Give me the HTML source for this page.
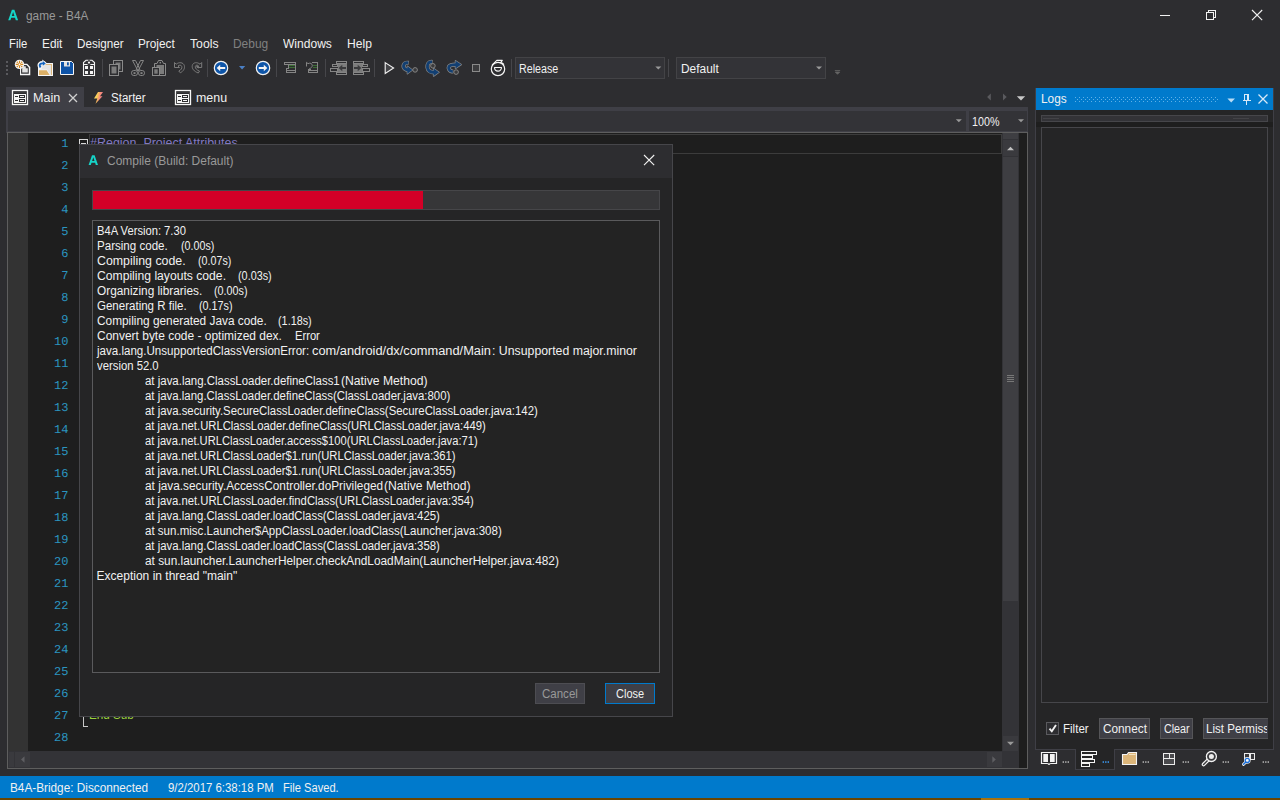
<!DOCTYPE html>
<html>
<head>
<meta charset="utf-8">
<title>game - B4A</title>
<style>
*{box-sizing:border-box;margin:0;padding:0}
html,body{width:1280px;height:800px;overflow:hidden;background:#2d2d30}
body{position:relative;font-family:"Liberation Sans",sans-serif;font-size:12px;color:#f1f1f1}
.a{position:absolute}
.t{position:absolute;white-space:pre;line-height:16px;height:16px;transform-origin:0 0}
.ln{position:absolute;left:30.5px;width:38px;text-align:right;font-family:"Liberation Mono",monospace;font-size:12px;color:#2b95c0;line-height:16px;height:16px;letter-spacing:0.1px;text-rendering:geometricPrecision}
svg{position:absolute;overflow:visible}
</style>
</head>
<body>
<!-- ===== TITLE BAR ===== -->
<svg style="left:0;top:0" width="1280" height="30" viewBox="0 0 1280 30">
  <path d="M8.2 20.2 L11.9 9.8 L14.4 9.8 L18.1 20.2 L15.8 20.2 L15 17.8 L11.2 17.8 L10.4 20.2 Z M11.8 16 L14.4 16 L13.1 12 Z" fill="#16d4c8" fill-rule="evenodd"/>
  <g stroke="#f1f1f1" stroke-width="1" fill="none" shape-rendering="crispEdges">
    <path d="M1160 15.5 H1170"/>
    <path d="M1206.5 12.5 H1213.5 V19.5 H1206.5 Z"/>
    <path d="M1208.5 12.5 V10.5 H1215.5 V17.5 H1213.5"/>
  </g>
  <path d="M1252 10 L1262.2 20.2 M1262.2 10 L1252 20.2" stroke="#f1f1f1" stroke-width="1.1" fill="none"/>
</svg>

<!-- ===== TOOLBAR ICONS ===== -->
<div class="a" style="left:515px;top:57px;width:150px;height:22px;background:#333337;border:1px solid #434346"></div>
<div class="a" style="left:676px;top:57px;width:150px;height:22px;background:#333337;border:1px solid #434346"></div>
<svg id="tb" style="left:0;top:54px" width="860" height="30" viewBox="0 54 860 30">
<!-- grip -->
<g fill="#5a5a5e" shape-rendering="crispEdges"><rect x="6" y="61" width="2" height="2"/><rect x="6" y="65" width="2" height="2"/><rect x="6" y="69" width="2" height="2"/><rect x="6" y="73" width="2" height="2"/></g>
<!-- separators -->
<g fill="#46464a" shape-rendering="crispEdges">
<rect x="102" y="59" width="1" height="18"/><rect x="207" y="59" width="1" height="18"/><rect x="276" y="59" width="1" height="18"/><rect x="325" y="59" width="1" height="18"/><rect x="374" y="59" width="1" height="18"/><rect x="511" y="59" width="1" height="18"/><rect x="668" y="59" width="1" height="18"/>
</g>
<!-- NEW -->
<g>
<path d="M20 63.8 H27.2 L30.3 67 V75.2 H20 Z" fill="#f6f6f6"/>
<path d="M21.1 65.1 H26.5 L28.8 67.4 V73.7 H21.1 Z" fill="#333336"/>
<path d="M22.2 66.3 H25.8 V68.3 H27.8 V72.6 H22.2 Z" fill="#e2e2e2"/>
<circle cx="19.5" cy="64.4" r="4.7" fill="#f3f3f3"/>
<g stroke="#d6871b" stroke-width="1.1" fill="none"><path d="M19.5 60.7 V68.1 M15.8 64.4 H23.2"/></g>
<g fill="#d6871b"><circle cx="17.3" cy="62.2" r="0.750"/><circle cx="21.7" cy="62.2" r="0.750"/><circle cx="17.3" cy="66.6" r="0.750"/><circle cx="21.7" cy="66.6" r="0.750"/></g>
<circle cx="19.5" cy="64.4" r="1.3" fill="#fff" stroke="#d6871b" stroke-width="0.9"/>
</g>
<!-- OPEN -->
<g>
<path d="M38 63 H53 V76 H38 Z" fill="#f6f6f6"/>
<path d="M39 64 H52 V75 H39 Z" fill="#dcb67a"/>
<path d="M39 65 H51 V75 H39 Z" fill="#e4e4e4"/>
<path d="M38 69.5 H47 L50.5 75 V76 H38 Z" fill="#f6f6f6"/>
<path d="M39 70.3 H46.6 L49.7 74.9 H39 Z" fill="#dcb067"/>
<path d="M40.3 67.6 C37.8 64 40.5 62.3 44 63" fill="none" stroke="#f6f6f6" stroke-width="3.6" stroke-linecap="round"/>
<path d="M42.3 59.6 L47 63.3 L42.3 67 Z" fill="#f6f6f6"/>
<path d="M40.5 67.4 C38.6 64.4 40.5 63 43.5 63.4" fill="none" stroke="#1565c0" stroke-width="1.9"/>
<path d="M42.8 61 L45.8 63.4 L42.8 65.8 Z" fill="#1565c0"/>
</g>
<!-- SAVE -->
<g>
<path d="M60.5 61.5 H71.5 L73.5 63.5 V74.5 H60.5 Z" fill="#0e53a7" stroke="#f6f6f6" stroke-width="1"/>
<rect x="64" y="62" width="6" height="4.5" fill="#e2e2e2"/>
<rect x="67" y="62.3" width="1.8" height="3" fill="#0e53a7"/>
</g>
<!-- EXPORT -->
<g>
<path d="M83.5 75.5 V62.5 L86 60.3 H92 L94.5 62.5 V75.5 Z" fill="#333336" stroke="#f3f3f3" stroke-width="1.1"/>
<rect x="88.3" y="59.5" width="1.4" height="1.6" fill="#2d2d30"/>
<path d="M84 64.5 H87.6 M90.4 64.5 H94" stroke="#f3f3f3" stroke-width="1" fill="none"/>
<circle cx="89" cy="62.6" r="1.1" fill="#f3f3f3"/>
<g fill="#f3f3f3" shape-rendering="crispEdges"><rect x="85" y="66" width="3" height="3"/><rect x="90" y="66" width="3" height="3"/><rect x="85" y="71" width="3" height="3"/><rect x="90" y="71" width="3" height="3"/></g>
</g>
<!-- COPY -->
<g stroke="#8a8a8a" stroke-width="1" fill="#2d2d30">
<rect x="113.5" y="60.5" width="9" height="11"/><rect x="115.5" y="62.5" width="5" height="7" fill="#7c7c7c" stroke="none"/>
<rect x="109.5" y="64.5" width="9" height="11"/><rect x="111.5" y="66.5" width="5" height="7" fill="#7c7c7c" stroke="none"/>
</g>
<!-- CUT -->
<g stroke="#858585" stroke-width="1" fill="none" stroke-linejoin="round">
<path d="M132.5 60.5 H135.5 L140 69.5 L138 70.8 Z"/>
<path d="M143.5 60.5 H140.5 L136 69.5 L138 70.8 Z"/>
<rect x="131.5" y="70.5" width="6" height="5" rx="2.3"/><rect x="138.5" y="70.5" width="6" height="5" rx="2.3"/>
<rect x="133.5" y="72.2" width="2" height="1.8" fill="#858585" stroke="none"/><rect x="140.5" y="72.2" width="2" height="1.8" fill="#858585" stroke="none"/>
</g>
<!-- PASTE -->
<g stroke="#8a8a8a" stroke-width="1" fill="none">
<path d="M154.5 68 V63.5 H157 L158.5 60.5 H162 L163.5 63.5 H165.5 V75.5 H160"/>
<rect x="156.5" y="65" width="7.5" height="9" fill="#7c7c7c" stroke="none"/>
<rect x="152.5" y="67.5" width="7" height="8" fill="#2d2d30"/>
<rect x="154.3" y="69.3" width="3.4" height="4.4" fill="#7c7c7c" stroke="none"/>
<rect x="159.6" y="62" width="1.4" height="1.4" fill="#8a8a8a" stroke="none"/>
</g>
<!-- UNDO -->
<g stroke="#7a7a7a" stroke-width="1" fill="none" stroke-linejoin="round">
<path d="M174.5 67.5 V62.5 L176.2 64.2 C179 61.8 183.3 62.3 184.3 65.5 C185.2 68.5 183.3 71.3 180.3 72.8 L178.8 71 C181 70 182.3 68.3 181.8 66.6 C181.3 64.8 179.3 64.8 178 66 L179.5 67.5 Z"/>
</g>
<!-- REDO -->
<g stroke="#7a7a7a" stroke-width="1" fill="none" stroke-linejoin="round">
<path d="M201.7 67.5 V62.5 L200 64.2 C197.2 61.8 193 62.3 192.3 65.5 C191.6 68.5 194 71.5 198.3 73 L199.5 71.2 C197 70.2 195 68.3 195.3 66.6 C195.7 64.8 197.5 64.8 198.7 66 L197.2 67.5 Z"/>
<path d="M196.5 66 L199.3 67.8" stroke-width="1.6"/>
</g>
<!-- BACK / FORWARD -->
<g>
<circle cx="221" cy="68" r="6.7" fill="#0e55a8" stroke="#f3f3f3" stroke-width="1.2"/>
<path d="M216.7 68 L220.2 64.8 V66.9 H225.2 V69.1 H220.2 V71.2 Z" fill="#f3f3f3"/>
<path d="M239 66 H245.2 L242.1 69.6 Z" fill="#4a7fc4"/>
<circle cx="263" cy="68" r="6.7" fill="#0e55a8" stroke="#f3f3f3" stroke-width="1.2"/>
<path d="M267.3 68 L263.8 64.8 V66.9 H258.8 V69.1 H263.8 V71.2 Z" fill="#f3f3f3"/>
</g>
<!-- COMMENT -->
<g stroke="#858585" stroke-width="1" fill="none" shape-rendering="crispEdges">
<rect x="284.5" y="62.5" width="11" height="2"/>
<path d="M288.5 64.5 V68.5 M295.5 64.5 V72.5 H286.5 V70.5 H295.5 M286.5 70.5 V68.5 H288.5"/>
<path d="M289 65.5 H295 M289 67.5 H295" stroke="#3a6e33"/>
</g>
<!-- UNCOMMENT -->
<g stroke="#858585" stroke-width="1" fill="none">
<g shape-rendering="crispEdges">
<path d="M311.5 62.5 H317.5 V72.5 H308.5 V69.5 H311"/>
<path d="M308.5 70.5 H317.5"/>
<path d="M312.5 65.5 H317 M312.5 67.5 H317" stroke="#3a6e33"/>
</g>
<path d="M306.5 66.5 V62.3 L308 63.7 C310 62.5 312.3 63.5 312.3 65.5 C312.3 67 310.8 68.3 309 69" />
</g>
<!-- OUTDENT -->
<g stroke="#858585" stroke-width="1" fill="none" shape-rendering="crispEdges">
<rect x="336.5" y="61.5" width="10" height="2"/><rect x="336.5" y="72.5" width="10" height="2"/>
<rect x="332.5" y="64.5" width="5" height="2"/><rect x="330.5" y="68.5" width="7" height="3"/>
<rect x="338" y="64" width="9" height="8" fill="#7c7c7c" stroke="none"/>
</g>
<path d="M338.7 68 L342.3 64.8 V66.9 H346 V69.1 H342.3 V71.2 Z" fill="#3a3a3c"/>
<!-- INDENT -->
<g stroke="#858585" stroke-width="1" fill="none" shape-rendering="crispEdges">
<rect x="353.5" y="61.5" width="10" height="2"/><rect x="353.5" y="72.5" width="10" height="2"/>
<rect x="362.5" y="64.5" width="5" height="2"/><rect x="362.5" y="68.5" width="7" height="3"/>
<rect x="353" y="64" width="9" height="8" fill="#7c7c7c" stroke="none"/>
</g>
<path d="M361.3 68 L357.7 64.8 V66.9 H354 V69.1 H357.7 V71.2 Z" fill="#3a3a3c"/>
<!-- PLAY -->
<path d="M385.2 62.6 L393.6 68 L385.2 73.4 Z" fill="#444447" stroke="#f3f3f3" stroke-width="1.1" stroke-linejoin="miter"/>
<!-- STEP INTO -->
<g fill="none" stroke-linejoin="round">
<path d="M408.8 62.9 C403.5 62 402.3 66.6 405 68.9 C406 69.7 407.3 70 408.3 70" stroke="#858585" stroke-width="4.2"/>
<path d="M407.4 66.2 L412.3 70 L407.4 73.8 Z" fill="#858585" stroke="#858585" stroke-width="1.4"/>
<path d="M408.3 62.9 C403.5 62 402.3 66.6 405 68.9 C406 69.7 407.3 70 408.3 70" stroke="#123f72" stroke-width="2.8"/>
<path d="M407.4 66.2 L412.3 70 L407.4 73.8 Z" fill="#123f72"/>
<circle cx="415.1" cy="69.9" r="2.3" fill="#3a3a3c" stroke="#858585" stroke-width="1"/>
</g>
<!-- STEP OVER -->
<g fill="none" stroke-linejoin="round">
<path d="M432.6 62 C428 61.3 427.2 65 427.5 67.5 C427.8 70.5 430.5 72.3 434 72.3" stroke="#858585" stroke-width="4.2"/>
<path d="M433.6 68.5 L439 72.3 L433.6 76.1 Z" fill="#858585" stroke="#858585" stroke-width="1.4"/>
<path d="M432.1 62 C428 61.3 427.2 65 427.5 67.5 C427.8 70.5 430.5 72.3 434 72.3" stroke="#123f72" stroke-width="2.8"/>
<path d="M433.6 68.5 L439 72.3 L433.6 76.1 Z" fill="#123f72"/>
<circle cx="432.9" cy="65.8" r="2.3" fill="#3a3a3c" stroke="#858585" stroke-width="1"/>
</g>
<!-- STEP OUT -->
<g fill="none" stroke-linejoin="round">
<path d="M453.3 71.5 C449 71.5 448.2 68 449 66.5 C450 64.6 452.5 64.6 456 64.6" stroke="#858585" stroke-width="4.2"/>
<path d="M455.5 60.8 L461.2 64.6 L455.5 68.4 Z" fill="#858585" stroke="#858585" stroke-width="1.4"/>
<path d="M452.8 71.5 C449 71.5 448.2 68 449 66.5 C450 64.6 452.5 64.6 456 64.6" stroke="#123f72" stroke-width="2.8"/>
<path d="M455.5 60.8 L461.2 64.6 L455.5 68.4 Z" fill="#123f72"/>
<circle cx="456.1" cy="72.1" r="2.3" fill="#3a3a3c" stroke="#858585" stroke-width="1"/>
</g>
<!-- STOP -->
<rect x="472.5" y="64.5" width="7" height="7" fill="#3c3c3e" stroke="#8a8a8a" stroke-width="1" shape-rendering="crispEdges"/>
<!-- RESTART -->
<g fill="none" stroke="#f6f6f6" stroke-width="1.1" stroke-linejoin="round">
<circle cx="498" cy="69" r="6.7" stroke-width="1.2"/>
<path d="M494.5 67.5 H501.5 A3.5 3.6 0 0 1 494.5 67.5 Z"/>
<path d="M492 65.2 L496.8 60.4 H502.3 L500.6 62.6 C502.2 63 503.3 63.7 504 64.6"/>
</g>
<!-- combo arrows -->
<path d="M655.3 66.5 H661.3 L658.3 69.5 Z" fill="#999"/>
<path d="M816 66.5 H822 L819 69.5 Z" fill="#999"/>
<path d="M834.8 70.5 H840.2 M835.3 72 H839.7 L837.5 74.3 Z" fill="#666" stroke="#666" stroke-width="0.8"/>

</svg>

<!-- ===== TABS ===== -->
<div class="a" style="left:6px;top:87px;width:78px;height:21px;background:#3f3f46"></div>
<div class="a" style="left:6px;top:107px;width:1022px;height:26px;background:#3f3f46"></div>
<div class="a" style="left:8px;top:111px;width:958px;height:20px;background:#333337"></div>
<div class="a" style="left:969px;top:111px;width:58px;height:20px;background:#333337"></div>
<svg style="left:0;top:84px" width="1040" height="50" viewBox="0 84 1040 50">
<!-- module icon (Main) -->
<g>
<rect x="12.5" y="90.5" width="15" height="14" fill="#2d2d30" stroke="#f6f6f6" stroke-width="1.3"/>
<rect x="14" y="94" width="12" height="9" fill="#f6f6f6" shape-rendering="crispEdges"/>
<rect x="14" y="92" width="12" height="1" fill="#3a3a3c" shape-rendering="crispEdges"/>
<g fill="#2d2d30" shape-rendering="crispEdges">
<rect x="15" y="96" width="3" height="1"/><rect x="19" y="95" width="6" height="3"/>
<rect x="15" y="100" width="3" height="1"/><rect x="19" y="99" width="6" height="3"/>
</g>
<g fill="#f6f6f6" shape-rendering="crispEdges"><rect x="20" y="96" width="4" height="1"/><rect x="20" y="100" width="4" height="1"/></g>
</g>
<g transform="translate(163 0)">
<rect x="12.5" y="90.5" width="15" height="14" fill="#2d2d30" stroke="#f6f6f6" stroke-width="1.3"/>
<rect x="14" y="94" width="12" height="9" fill="#f6f6f6" shape-rendering="crispEdges"/>
<rect x="14" y="92" width="12" height="1" fill="#3a3a3c" shape-rendering="crispEdges"/>
<g fill="#2d2d30" shape-rendering="crispEdges">
<rect x="15" y="96" width="3" height="1"/><rect x="19" y="95" width="6" height="3"/>
<rect x="15" y="100" width="3" height="1"/><rect x="19" y="99" width="6" height="3"/>
</g>
<g fill="#f6f6f6" shape-rendering="crispEdges"><rect x="20" y="96" width="4" height="1"/><rect x="20" y="100" width="4" height="1"/></g>
</g>
<!-- tab close X -->
<path d="M69 94 L77 102 M77 94 L69 102" stroke="#d0d0d0" stroke-width="1.3" fill="none"/>
<!-- lightning -->
<defs><linearGradient id="lg" x1="0" y1="0.2" x2="1" y2="0.5"><stop offset="0" stop-color="#f3ea62"/><stop offset="0.4" stop-color="#f9c45a"/><stop offset="0.62" stop-color="#f78f78"/><stop offset="1" stop-color="#ee7590"/></linearGradient></defs>
<path d="M98 92 L103 92 L100 96.3 L102.5 96.3 L95.5 103.8 L97.3 98.6 L94 98.6 Z" fill="url(#lg)"/>
<!-- tab scroll arrows -->
<path d="M990.8 93.5 V100.5 L987.1 97 Z" fill="#5a5a5e"/>
<path d="M1003 93.5 V100.5 L1006.7 97 Z" fill="#5a5a5e"/>
<path d="M1016.8 96.3 H1025.2 L1021 100.5 Z" fill="#c8c8c8"/>
<!-- combobox arrows -->
<path d="M955.8 119.3 H961.8 L958.8 122.3 Z" fill="#999"/>
<path d="M1018 119.3 H1024 L1021 122.3 Z" fill="#999"/>

</svg>

<!-- ===== EDITOR ===== -->
<div class="a" style="left:7px;top:132px;width:1021px;height:637px;background:#1e1e1e;border:1px solid #5e5e5e"></div>
<div class="a" style="left:8px;top:133px;width:20px;height:618px;background:#333333"></div>
<div class="a" style="left:89px;top:134px;width:913px;height:20px;border:1px solid #3c3c3c"></div>
<!-- vertical scrollbar -->
<div class="a" style="left:1002px;top:133px;width:17px;height:618px;background:#333337"></div>
<div class="a" style="left:1003px;top:133px;width:15px;height:6px;background:#3e3e42"></div>
<div class="a" style="left:1003px;top:140px;width:15px;height:16px;background:#3a3a3e"></div>
<div class="a" style="left:1003px;top:157px;width:15px;height:444px;background:#3e3e42"></div>
<div class="a" style="left:1003px;top:736px;width:15px;height:15px;background:#3a3a3e"></div>
<!-- horizontal scrollbar -->
<div class="a" style="left:8px;top:751px;width:994px;height:17px;background:#333337"></div>
<div class="a" style="left:1002px;top:751px;width:17px;height:17px;background:#333337"></div>
<div class="a" style="left:9px;top:752px;width:5px;height:15px;background:#3a3a3e"></div>
<div class="a" style="left:15px;top:752px;width:15px;height:15px;background:#3a3a3e"></div>
<div class="a" style="left:987px;top:752px;width:15px;height:15px;background:#3a3a3e"></div>
<svg style="left:0;top:130px" width="1030" height="640" viewBox="0 130 1030 640">
<!-- collapse box -->
<rect x="79.5" y="139.5" width="8" height="8" fill="#1e1e1e" stroke="#d8d8d8" stroke-width="1" shape-rendering="crispEdges"/>
<rect x="81" y="143" width="5" height="1" fill="#d8d8d8" shape-rendering="crispEdges"/>
<!-- fold end bracket -->
<path d="M83.5 715 V726.5 H88" fill="none" stroke="#c8c8c8" stroke-width="1" shape-rendering="crispEdges"/>
<!-- v scrollbar arrows -->
<path d="M1007 150.3 H1014 L1010.5 146.8 Z" fill="#c0c0c0"/>
<path d="M1007 741.8 H1014 L1010.5 745.3 Z" fill="#999"/>
<g fill="#777" shape-rendering="crispEdges"><rect x="1007" y="375" width="7" height="1"/><rect x="1007" y="377" width="7" height="1"/><rect x="1007" y="379" width="7" height="1"/><rect x="1007" y="381" width="7" height="1"/></g>
<!-- h scrollbar arrows -->
<path d="M24.5 756.2 V762.8 L21 759.5 Z" fill="#5e5e62"/>
<path d="M992.3 756.2 V762.8 L995.8 759.5 Z" fill="#5e5e62"/>

</svg>
<div class="ln" style="top:136px">1</div>
<div class="ln" style="top:158px">2</div>
<div class="ln" style="top:180px">3</div>
<div class="ln" style="top:202px">4</div>
<div class="ln" style="top:224px">5</div>
<div class="ln" style="top:246px">6</div>
<div class="ln" style="top:268px">7</div>
<div class="ln" style="top:290px">8</div>
<div class="ln" style="top:312px">9</div>
<div class="ln" style="top:334px">10</div>
<div class="ln" style="top:356px">11</div>
<div class="ln" style="top:378px">12</div>
<div class="ln" style="top:400px">13</div>
<div class="ln" style="top:422px">14</div>
<div class="ln" style="top:444px">15</div>
<div class="ln" style="top:466px">16</div>
<div class="ln" style="top:488px">17</div>
<div class="ln" style="top:510px">18</div>
<div class="ln" style="top:532px">19</div>
<div class="ln" style="top:554px">20</div>
<div class="ln" style="top:576px">21</div>
<div class="ln" style="top:598px">22</div>
<div class="ln" style="top:620px">23</div>
<div class="ln" style="top:642px">24</div>
<div class="ln" style="top:664px">25</div>
<div class="ln" style="top:686px">26</div>
<div class="ln" style="top:708px">27</div>
<div class="ln" style="top:730px">28</div>
<div class="t" style="left:89.70px;top:135px;transform:scaleX(1.0394);color:#8179c2">#Region  Project Attributes</div>
<div class="t" style="left:88.83px;top:707px;transform:scaleX(0.9733);color:#9bd23c">End Sub</div>

<!-- ===== LOGS PANEL ===== -->
<div class="a" style="left:1035px;top:88px;width:239px;height:662px;background:#252526;border:1px solid #3f3f46"></div>
<div class="a" style="left:1036px;top:88px;width:237px;height:22px;background:#007acc"></div>
<div class="a" style="left:1041px;top:115px;width:227px;height:7px;background:#333337;border:1px solid #46464a"></div>
<div class="a" style="left:1043px;top:118px;width:16px;height:1px;background:#434347"></div>
<div class="a" style="left:1233px;top:118px;width:16px;height:1px;background:#434347"></div>
<div class="a" style="left:1036px;top:122px;width:237px;height:5px;background:#1e1e1e"></div>
<div class="a" style="left:1041px;top:127px;width:227px;height:576px;border:1px solid #46464a"></div>
<!-- bottom controls -->
<div class="a" style="left:1046px;top:722px;width:13px;height:13px;background:#2d2d30;border:1px solid #5a5a5e"></div>
<div class="a" style="left:1099px;top:718px;width:51px;height:21px;background:#3f3f46;border:1px solid #555558"></div>
<div class="a" style="left:1160px;top:718px;width:33px;height:21px;background:#3f3f46;border:1px solid #555558"></div>
<div class="a" style="left:1203px;top:718px;width:65px;height:21px;background:#3f3f46;border:1px solid #555558;border-right:none"></div>
<!-- bottom tab strip -->
<div class="a" style="left:1075px;top:749px;width:40px;height:21px;background:#252526;border:1px solid #3f3f46;border-top:none"></div>
<svg style="left:1030px;top:84px" width="250" height="690" viewBox="1030 84 250 690">
<!-- dotted grip -->
<defs><pattern id="dots" x="1075" y="97" width="4" height="4" patternUnits="userSpaceOnUse"><rect x="0" y="0" width="1" height="1" fill="#5fb0e8"/><rect x="2" y="2" width="1" height="1" fill="#5fb0e8"/></pattern></defs>
<rect x="1075" y="97" width="144" height="5" fill="url(#dots)" shape-rendering="crispEdges"/>
<path d="M1227.4 98.6 H1235 L1231.2 102.4 Z" fill="#b8dcf5"/>
<!-- pin -->
<g stroke="#d8e9f7" stroke-width="1" fill="none" shape-rendering="crispEdges"><path d="M1244.5 94.5 H1248.5 V100.5 H1244.5 Z M1242.5 100.5 H1250.5 M1246.5 100.5 V105"/><rect x="1247" y="95" width="1" height="5" fill="#d8e9f7" stroke="none"/></g>
<path d="M1258.5 94.5 L1267.5 103.5 M1267.5 94.5 L1258.5 103.5" stroke="#d8e9f7" stroke-width="1.3" fill="none"/>
<!-- checkbox check -->
<path d="M1049.5 728.6 L1051.8 731.3 L1056 725" fill="none" stroke="#f1f1f1" stroke-width="1.9"/>
<!-- book icon -->
<g>
<path d="M1041.5 752.5 H1056.5 V763.5 H1051 Q1049 763.5 1049 765 Q1049 763.5 1047 763.5 H1041.5 Z" fill="#2d2d30" stroke="#f3f3f3" stroke-width="1.2"/>
<rect x="1043.3" y="754" width="4.7" height="8" fill="#f3f3f3"/><rect x="1050" y="754" width="4.7" height="8" fill="#f3f3f3"/>
</g>
<!-- logs icon -->
<g fill="#252526" stroke="#f3f3f3" stroke-width="1.1" shape-rendering="crispEdges">
<rect x="1081.5" y="751.5" width="15" height="3"/><rect x="1081.5" y="755.5" width="11" height="3"/><rect x="1081.5" y="759.5" width="13" height="3"/><rect x="1081.5" y="763.5" width="8" height="3"/>
</g>
<!-- folder icon -->
<path d="M1122.5 764.5 V754.5 H1127 L1128.5 752.5 H1136.5 V764.5 Z" fill="#dcb67a" stroke="#f3f3f3" stroke-width="1.1"/>
<rect x="1129" y="754" width="6.5" height="1" fill="#f3e3c3"/>
<!-- grid icon -->
<rect x="1163.5" y="753.5" width="11" height="11" fill="#4a4a4d" stroke="#ececec" stroke-width="1" shape-rendering="crispEdges"/>
<path d="M1169.5 753.5 V758.5 M1163.5 758.5 H1174.5" stroke="#ececec" stroke-width="1" fill="none" shape-rendering="crispEdges"/>
<!-- search icon -->
<g fill="none">
<path d="M1208.3 759.8 L1203.6 764.4" stroke="#f3f3f3" stroke-width="3.8" stroke-linecap="round"/>
<path d="M1208.3 759.8 L1203.6 764.4" stroke="#3a3a3d" stroke-width="1.4" stroke-linecap="round"/>
<circle cx="1211.4" cy="756.5" r="5" fill="#3a3a3d" stroke="#f3f3f3" stroke-width="1.3"/>
<circle cx="1211.4" cy="756.5" r="2.5" fill="#ececec"/>
</g>
<!-- find refs icon -->
<rect x="1244.5" y="753.5" width="10" height="6" fill="#3a3a3d" stroke="#ececec" stroke-width="1" shape-rendering="crispEdges"/>
<rect x="1249" y="754" width="2" height="5" fill="#ececec" shape-rendering="crispEdges"/>
<path d="M1245.6 762.2 L1243.6 764.3" stroke="#f3f3f3" stroke-width="3" stroke-linecap="round" fill="none"/>
<circle cx="1247.3" cy="760.4" r="3.3" fill="#f3f3f3"/>
<path d="M1245.6 762.2 L1243.6 764.3" stroke="#1a6ed8" stroke-width="1.5" stroke-linecap="round" fill="none"/>
<circle cx="1247.3" cy="760.4" r="2.1" fill="#f6f6f6" stroke="#1a6ed8" stroke-width="1.3"/>
<!-- "..." labels -->
<g fill="#a8a8a8"><rect x="1062.6" y="761.2" width="1.4" height="1.7"/><rect x="1065.1" y="761.2" width="1.4" height="1.7"/><rect x="1067.6" y="761.2" width="1.4" height="1.7"/></g>
<g fill="#3a8fe0"><rect x="1102.6" y="761.2" width="1.4" height="1.7"/><rect x="1105.1" y="761.2" width="1.4" height="1.7"/><rect x="1107.6" y="761.2" width="1.4" height="1.7"/></g>
<g fill="#a8a8a8"><rect x="1142.6" y="761.2" width="1.4" height="1.7"/><rect x="1145.1" y="761.2" width="1.4" height="1.7"/><rect x="1147.6" y="761.2" width="1.4" height="1.7"/></g>
<g fill="#a8a8a8"><rect x="1182.6" y="761.2" width="1.4" height="1.7"/><rect x="1185.1" y="761.2" width="1.4" height="1.7"/><rect x="1187.6" y="761.2" width="1.4" height="1.7"/></g>
<g fill="#a8a8a8"><rect x="1222.6" y="761.2" width="1.4" height="1.7"/><rect x="1225.1" y="761.2" width="1.4" height="1.7"/><rect x="1227.6" y="761.2" width="1.4" height="1.7"/></g>
<g fill="#a8a8a8"><rect x="1262.6" y="761.2" width="1.4" height="1.7"/><rect x="1265.1" y="761.2" width="1.4" height="1.7"/><rect x="1267.6" y="761.2" width="1.4" height="1.7"/></g>

</svg>

<!-- ===== STATUS BAR ===== -->
<div class="a" style="left:0;top:776px;width:1280px;height:22px;background:#007acc"></div>
<div class="a" style="left:0;top:798px;width:1280px;height:2px;background:#6a4500"></div>
<div class="a" style="left:981px;top:798px;width:48px;height:2px;background:#a8720f"></div>

<!-- ===== DIALOG ===== -->
<div class="a" style="left:79px;top:144px;width:594px;height:573px;background:#252526;border:1px solid #46464a"></div>
<div class="a" style="left:80px;top:145px;width:592px;height:33px;background:#2d2d30"></div>
<div class="a" style="left:92px;top:190px;width:568px;height:20px;background:#363638;border:1px solid #464649"></div>
<div class="a" style="left:93px;top:191px;width:330px;height:18px;background:#d40027"></div>
<div class="a" style="left:92px;top:220px;width:568px;height:453px;background:#232323;border:1px solid #5a5a5c"></div>
<div class="a" style="left:535px;top:683px;width:50px;height:21px;background:#3f3f46;border:1px solid #4d4d52"></div>
<div class="a" style="left:605px;top:683px;width:50px;height:21px;background:#3f3f46;border:1px solid #007acc"></div>
<svg style="left:79px;top:144px" width="594" height="40" viewBox="79 144 594 40">
  <path d="M88.6 165 L92 155.3 L94.6 155.3 L98 165 L95.8 165 L95.1 162.8 L91.5 162.8 L90.8 165 Z M92.1 161 L94.5 161 L93.3 157.3 Z" fill="#16d4c8" fill-rule="evenodd"/>
  <path d="M644 155 L654.2 165.2 M654.2 155 L644 165.2" stroke="#f1f1f1" stroke-width="1.1" fill="none"/>
</svg>

<div class="t" style="left:26.00px;top:8px;transform:scaleX(0.9841);color:#999999">game - B4A</div>
<div class="t" style="left:9.46px;top:36px;transform:scaleX(0.9389)">File</div>
<div class="t" style="left:41.52px;top:36px;transform:scaleX(0.9850)">Edit</div>
<div class="t" style="left:76.73px;top:36px;transform:scaleX(0.9723)">Designer</div>
<div class="t" style="left:137.62px;top:36px;transform:scaleX(0.9838)">Project</div>
<div class="t" style="left:189.80px;top:36px;transform:scaleX(1.0179)">Tools</div>
<div class="t" style="left:283.10px;top:36px;transform:scaleX(1.0041)">Windows</div>
<div class="t" style="left:347.09px;top:36px;transform:scaleX(1.0083)">Help</div>
<div class="t" style="left:233.31px;top:36px;transform:scaleX(0.9941);color:#808080">Debug</div>
<div class="t" style="left:519.21px;top:61px;transform:scaleX(0.8907)">Release</div>
<div class="t" style="left:680.51px;top:61px;transform:scaleX(0.9919)">Default</div>
<div class="t" style="left:33.05px;top:90px;transform:scaleX(1.0480)">Main</div>
<div class="t" style="left:110.84px;top:90px;transform:scaleX(0.9600)">Starter</div>
<div class="t" style="left:196.07px;top:90px;transform:scaleX(1.0345)">menu</div>
<div class="t" style="left:972.31px;top:114px;transform:scaleX(0.8933)">100%</div>
<div class="t" style="left:1040.62px;top:91px;transform:scaleX(0.9840)">Logs</div>
<div class="t" style="left:106.90px;top:153px;transform:scaleX(0.9984);color:#999999">Compile (Build: Default)</div>
<div class="t" style="left:541.90px;top:686px;transform:scaleX(0.9595);color:#999999">Cancel</div>
<div class="t" style="left:615.60px;top:686px;transform:scaleX(0.9161)">Close</div>
<div class="t" style="left:1063.34px;top:721px;transform:scaleX(0.9615)">Filter</div>
<div class="t" style="left:1103.40px;top:721px;transform:scaleX(0.9822)">Connect</div>
<div class="t" style="left:1164.10px;top:721px;transform:scaleX(0.8931)">Clear</div>
<div class="a" style="left:1204px;top:721px;width:63px;height:16px;overflow:hidden"><div class="t" style="left:2.03px;top:0;transform:scaleX(0.9656)">List Permissions</div></div>
<div class="t" style="left:10.32px;top:780px;transform:scaleX(0.9813)">B4A-Bridge: Disconnected</div>
<div class="t" style="left:168.20px;top:780px;transform:scaleX(0.9495)">9/2/2017 6:38:18 PM</div>
<div class="t" style="left:283.27px;top:780px;transform:scaleX(0.9276)">File Saved.</div>
<div class="t" style="left:96.60px;top:223px;transform:scaleX(0.9316)">B4A Version: 7.30</div>
<div class="t" style="left:96.60px;top:238px;transform:scaleX(0.9644)">Parsing code.</div>
<div class="t" style="left:180.60px;top:238px;transform:scaleX(0.8919)">(0.00s)</div>
<div class="t" style="left:96.60px;top:253px;transform:scaleX(1.0306)">Compiling code.</div>
<div class="t" style="left:197.50px;top:253px;transform:scaleX(0.8919)">(0.07s)</div>
<div class="t" style="left:96.60px;top:268px;transform:scaleX(1.0126)">Compiling layouts code.</div>
<div class="t" style="left:238.40px;top:268px;transform:scaleX(0.9027)">(0.03s)</div>
<div class="t" style="left:96.60px;top:283px;transform:scaleX(0.9858)">Organizing libraries.</div>
<div class="t" style="left:214.20px;top:283px;transform:scaleX(0.8973)">(0.00s)</div>
<div class="t" style="left:96.60px;top:298px;transform:scaleX(0.9602)">Generating R file.</div>
<div class="t" style="left:199.40px;top:298px;transform:scaleX(0.8973)">(0.17s)</div>
<div class="t" style="left:96.60px;top:313px;transform:scaleX(0.9860)">Compiling generated Java code.</div>
<div class="t" style="left:278.40px;top:313px;transform:scaleX(0.9027)">(1.18s)</div>
<div class="t" style="left:96.60px;top:328px;transform:scaleX(0.9973)">Convert byte code - optimized dex.</div>
<div class="t" style="left:294.67px;top:328px;transform:scaleX(0.9308)">Error</div>
<div class="t" style="left:96.60px;top:343px;transform:scaleX(0.9639)">java.lang.UnsupportedClassVersionError:</div>
<div class="t" style="left:312.10px;top:343px;transform:scaleX(1.0689)">com/android/dx/command/Main</div>
<div class="t" style="left:492.38px;top:343px;transform:scaleX(1.0248)">: Unsupported major.minor</div>
<div class="t" style="left:96.60px;top:358px;transform:scaleX(0.9431)">version 52.0</div>
<div class="t" style="left:144.60px;top:373px;transform:scaleX(0.9539)">at java.lang.ClassLoader.defineClass1</div>
<div class="t" style="left:340.80px;top:373px;transform:scaleX(1.0141)">(Native Method)</div>
<div class="t" style="left:144.60px;top:388px;transform:scaleX(0.9516)">at java.lang.ClassLoader.defineClass(ClassLoader.java:800)</div>
<div class="t" style="left:144.60px;top:403px;transform:scaleX(0.9471)">at java.security.SecureClassLoader.defineClass(SecureClassLoader.java:142)</div>
<div class="t" style="left:144.60px;top:418px;transform:scaleX(0.9392)">at java.net.URLClassLoader.defineClass(URLClassLoader.java:449)</div>
<div class="t" style="left:144.60px;top:433px;transform:scaleX(0.9303)">at java.net.URLClassLoader.access$100(URLClassLoader.java:71)</div>
<div class="t" style="left:144.60px;top:448px;transform:scaleX(0.9366)">at java.net.URLClassLoader$1.run(URLClassLoader.java:361)</div>
<div class="t" style="left:144.60px;top:463px;transform:scaleX(0.9366)">at java.net.URLClassLoader$1.run(URLClassLoader.java:355)</div>
<div class="t" style="left:144.60px;top:478px;transform:scaleX(0.9843)">at java.security.AccessController.doPrivileged</div>
<div class="t" style="left:384.40px;top:478px;transform:scaleX(1.0141)">(Native Method)</div>
<div class="t" style="left:144.60px;top:493px;transform:scaleX(0.9407)">at java.net.URLClassLoader.findClass(URLClassLoader.java:354)</div>
<div class="t" style="left:144.60px;top:508px;transform:scaleX(0.9487)">at java.lang.ClassLoader.loadClass(ClassLoader.java:425)</div>
<div class="t" style="left:144.60px;top:523px;transform:scaleX(0.9620)">at sun.misc.Launcher$AppClassLoader.loadClass(Launcher.java:308)</div>
<div class="t" style="left:144.60px;top:538px;transform:scaleX(0.9487)">at java.lang.ClassLoader.loadClass(ClassLoader.java:358)</div>
<div class="t" style="left:144.60px;top:553px;transform:scaleX(0.9862)">at sun.launcher.LauncherHelper.checkAndLoadMain(LauncherHelper.java:482)</div>
<div class="t" style="left:96.60px;top:568px;transform:scaleX(1.0000)">Exception in thread &quot;main&quot;</div>
</body>
</html>
